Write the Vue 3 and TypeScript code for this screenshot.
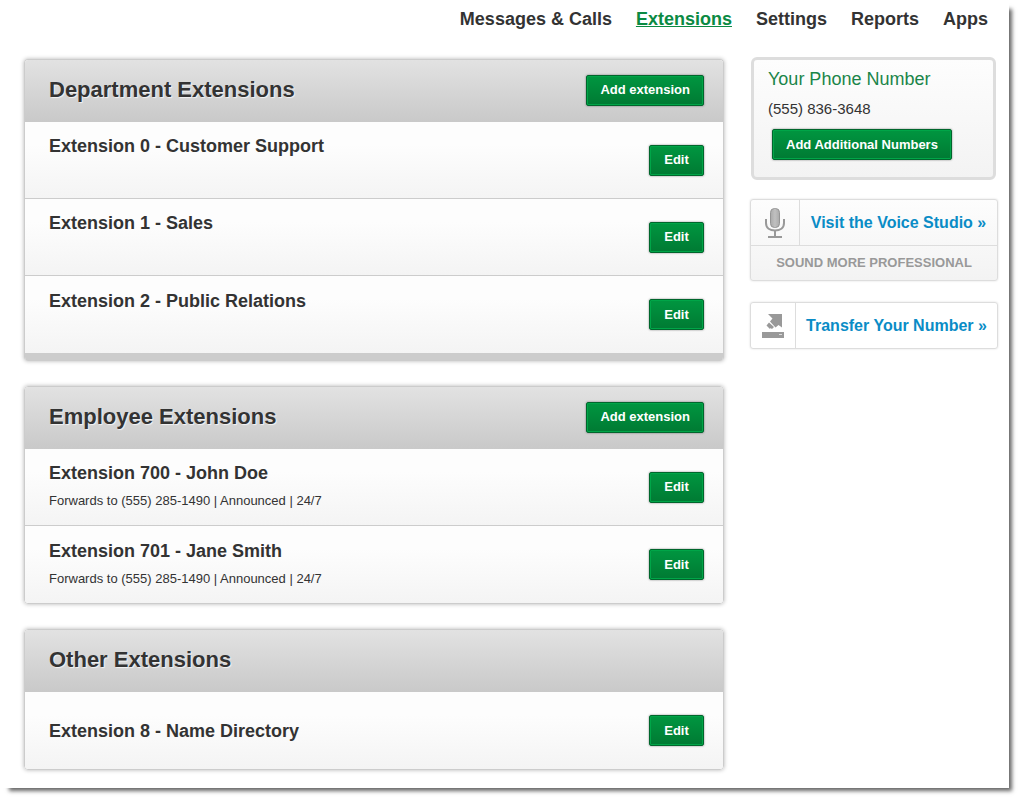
<script setup lang="ts">
interface Extension {
  name: string
  detail?: string
}

interface Group {
  title: string
  canAdd: boolean
  footer: boolean
  centered: boolean
  items: Extension[]
}

const links: string[] = ['Messages & Calls', 'Extensions', 'Settings', 'Reports', 'Apps']
const current = 'Extensions'

const groups: Group[] = [
  {
    title: 'Department Extensions',
    canAdd: true,
    footer: true,
    centered: false,
    items: [
      { name: 'Extension 0 - Customer Support' },
      { name: 'Extension 1 - Sales' },
      { name: 'Extension 2 - Public Relations' },
    ],
  },
  {
    title: 'Employee Extensions',
    canAdd: true,
    footer: false,
    centered: false,
    items: [
      { name: 'Extension 700 - John Doe', detail: 'Forwards to (555) 285-1490 | Announced | 24/7' },
      { name: 'Extension 701 - Jane Smith', detail: 'Forwards to (555) 285-1490 | Announced | 24/7' },
    ],
  },
  {
    title: 'Other Extensions',
    canAdd: false,
    footer: false,
    centered: true,
    items: [{ name: 'Extension 8 - Name Directory' }],
  },
]
</script>

<template>
  <div class="page">
    <nav class="nav">
      <a v-for="link in links" :key="link" href="#" :class="{ active: link === current }">{{ link }}</a>
    </nav>

    <div class="columns">
      <main class="groups">
        <section v-for="group in groups" :key="group.title" class="panel">
          <header class="panel-head">
            <h2>{{ group.title }}</h2>
            <button v-if="group.canAdd" type="button" class="btn">Add extension</button>
          </header>
          <ul>
            <li v-for="item in group.items" :key="item.name">
              <div class="info" :class="{ centered: group.centered }">
                <h3>{{ item.name }}</h3>
                <p v-if="item.detail">{{ item.detail }}</p>
              </div>
              <button type="button" class="btn">Edit</button>
            </li>
          </ul>
          <div v-if="group.footer" class="panel-foot"></div>
        </section>
      </main>

      <aside class="side">
        <section class="phone">
          <h2>Your Phone Number</h2>
          <p>(555) 836-3648</p>
          <button type="button" class="btn">Add Additional Numbers</button>
        </section>

        <section class="promo studio">
          <div class="promo-main">
            <span class="promo-icon">
              <svg width="22" height="32" viewBox="0 0 22 32" aria-hidden="true">
                <defs>
                  <linearGradient id="mic" x1="0" x2="1" y1="0" y2="0">
                    <stop offset="0" stop-color="#aaa" />
                    <stop offset="0.5" stop-color="#c0c0c0" />
                    <stop offset="1" stop-color="#aaa" />
                  </linearGradient>
                </defs>
                <rect x="6.5" y="1.5" width="9" height="19" rx="4" fill="url(#mic)" stroke="#959595" />
                <path d="M2 12v4c0 5 4 7.500 9 7.500s9-2.500 9-7.500v-4" fill="none" stroke="#999" stroke-width="2" />
                <path d="M11 24v5.500M4 30h14" fill="none" stroke="#999" stroke-width="2" />
              </svg>
            </span>
            <a href="#">Visit the Voice Studio »</a>
          </div>
          <p class="tagline">SOUND MORE PROFESSIONAL</p>
        </section>

        <section class="promo transfer">
          <div class="promo-main">
            <span class="promo-icon">
              <svg width="22" height="24" viewBox="0 0 22 24" aria-hidden="true" fill="#999">
                <path d="M6 0h14v13.500l-3.500-2.500-3 2.500-5.500-6 2.500-3z" />
                <path d="M7 8.500l5 4.500-2 2-1.500-1-0.500 1-3.500-3.500z" />
                <path d="M0 18h22v6H0z" />
                <path d="M17 20h3v1h-3z" fill="#ddd" />
              </svg>
            </span>
            <a href="#">Transfer Your Number »</a>
          </div>
        </section>
      </aside>
    </div>
  </div>
</template>

<style>
body {
  margin: 0;
  background: #fff;
}
</style>

<style scoped>
.page {
  margin: 0 15px 15px 0;
  padding: 0 11px 18px 24px;
  background: #fff;
  box-shadow: 6px 6px 4px -3px rgba(0, 0, 0, 0.6);
  color: #333;
  font-family: "Liberation Sans", Arial, sans-serif;
}

h2,
h3,
p,
ul {
  margin: 0;
  padding: 0;
}

.nav {
  display: flex;
  justify-content: flex-end;
  gap: 24px;
  height: 38px;
  padding: 0 10px 21px 0;
  align-items: center;
}

.nav a {
  color: #333;
  font-size: 18px;
  font-weight: bold;
  line-height: 20px;
  text-decoration: none;
}

.nav a.active {
  color: #0b8a43;
  text-decoration: underline;
}

.columns {
  display: flex;
  align-items: flex-start;
  gap: 26px;
}

.groups {
  display: flex;
  flex: 1;
  flex-direction: column;
  gap: 25px;
}

.panel {
  overflow: hidden;
  border: 1px solid #ccc;
  border-radius: 4px;
  box-shadow: 0 0 4px rgba(0, 0, 0, 0.3);
}

.panel:has(.panel-foot) {
  border-bottom: 0;
}

.panel-head {
  display: flex;
  box-sizing: border-box;
  align-items: center;
  justify-content: space-between;
  height: 62px;
  padding: 0 19px 2px 24px;
  background: linear-gradient(#e2e2e2, #c9c9c9);
}

.panel-head h2 {
  font-size: 22px;
  line-height: 26px;
  text-shadow: 1px 1px 1px #f4f4f4;
}

.panel ul {
  list-style: none;
}

.panel li {
  display: flex;
  box-sizing: border-box;
  align-items: center;
  justify-content: space-between;
  min-height: 77px;
  padding: 0 19px 0 24px;
  border-bottom: 1px solid #ccc;
  background: linear-gradient(#fdfdfd 30%, #f4f4f4);
}

.panel li:last-child {
  border-bottom: 0;
}

.info {
  min-height: 50px;
}

.info.centered {
  min-height: 0;
}

.info h3 {
  font-size: 18px;
  line-height: 22px;
}

.info p {
  margin-top: 8px;
  font-size: 13px;
  line-height: 18px;
}

.panel-foot {
  height: 8px;
  background: #ccc;
}

.btn {
  min-width: 55px;
  height: 31px;
  padding: 0 13px;
  border: 1px solid #00662c;
  border-radius: 2px;
  background: linear-gradient(#009640, #007a33);
  box-shadow: inset 0 0 0 1px #00a548, 0 0 2px rgba(0, 0, 0, 0.5);
  color: #fff;
  font-family: inherit;
  font-size: 13px;
  font-weight: bold;
  line-height: 16px;
}

.side {
  width: 248px;
}

.phone {
  margin: -2px 2px 19px 1px;
  padding: 8px 14px 17px;
  border: 3px solid #ddd;
  border-radius: 6px;
  background: linear-gradient(#fdfdfd, #f3f3f3);
}

.phone h2 {
  color: #1a8549;
  font-size: 18px;
  font-weight: normal;
  line-height: 22px;
}

.phone p {
  margin: 9px 0 10px;
  font-size: 15px;
  line-height: 20px;
}

.phone .btn {
  margin-left: 4px;
}

.promo {
  border: 1px solid #ddd;
  border-radius: 3px;
  box-shadow: 0 0 2px rgba(0, 0, 0, 0.15);
}

.promo-main {
  display: flex;
  height: 45px;
}

.promo-icon {
  display: flex;
  flex: none;
  align-items: center;
  justify-content: center;
  border-right: 1px solid #ddd;
}

.promo a {
  flex: 1;
  color: #0a8cc6;
  font-size: 16px;
  font-weight: bold;
  line-height: 46px;
  text-align: center;
  text-decoration: none;
  white-space: nowrap;
}

.studio {
  margin-bottom: 21px;
  background: linear-gradient(#fdfdfd, #f3f3f3);
}

.studio .promo-icon {
  width: 48px;
}

.transfer .promo-icon {
  width: 44px;
}

.tagline {
  border-top: 1px solid #ddd;
  color: #999;
  font-size: 13px;
  font-weight: bold;
  line-height: 34px;
  text-align: center;
}
</style>
